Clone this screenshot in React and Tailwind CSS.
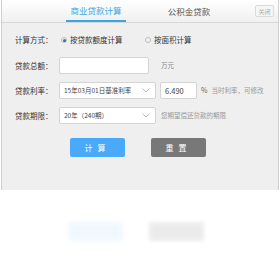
import React from 'react';

const font = { fontFamily: '"Noto Sans CJK SC", "Liberation Sans", sans-serif' };

function Chevron() {
  return (
    <svg width="8" height="5" viewBox="0 0 8 5" className="shrink-0">
      <path d="M0.5 0.5 L4 4 L7.5 0.5" fill="none" stroke="#aaa" strokeWidth="0.8" />
    </svg>
  );
}

function Radio({ checked }) {
  return (
    <span className="w-[6px] h-[6px] rounded-full border border-[#bbb] bg-[#f4f4f4] flex items-center justify-center">
      {checked && <span className="w-[3px] h-[3px] rounded-full bg-[#2a6fb3]" />}
    </span>
  );
}

function Buttons({ ghost }) {
  return (
    <div className="flex gap-[26px] pl-[68px]">
      <div className={`w-[55px] h-[19px] rounded-[2px] flex items-center justify-center text-[8px] text-white tracking-[5px] ${ghost ? 'bg-[#dbeeff]' : 'bg-[#49a9fb]'}`}>
        {ghost ? '' : '计算'}
      </div>
      <div className={`w-[55px] h-[19px] rounded-[2px] flex items-center justify-center text-[8px] text-white tracking-[5px] ${ghost ? 'bg-[#cfcfcf]' : 'bg-[#787878]'}`}>
        {ghost ? '' : '重置'}
      </div>
    </div>
  );
}

export default function App() {
  return (
    <div className="w-[280px] h-[270px] bg-white overflow-hidden" style={font}>
      <div className="mx-[1px] border-x border-[#cfcfcf] bg-[#efefef] h-[190px]">
        <div className="h-[23px] border-b border-[#d8d8d8] bg-gradient-to-b from-white to-[#f0f0f0] flex items-end relative">
          <div className="ml-[64px] w-[60px] h-[22px] flex items-center justify-center text-[8.5px] text-[#3aa6e8] border-b-2 border-[#3aa6e8]">
            商业贷款计算
          </div>
          <div className="ml-[33px] w-[60px] h-[22px] flex items-center justify-center text-[8.5px] text-[#555]">
            公积金贷款
          </div>
          <div className="absolute right-[4px] top-[5px] w-[19px] h-[12px] border border-[#dadada] rounded-[2px] bg-[#f6f6f6] text-[6px] text-[#aaa] flex items-center justify-center">
            关闭
          </div>
        </div>

        <div className="pl-[13px] pt-[9px] text-[7.5px] text-[#333]">
          <div className="flex items-center h-[16px]">
            <span className="w-[46px]">计算方式：</span>
            <Radio checked />
            <span className="ml-[3px] w-[75px]">按贷款额度计算</span>
            <Radio />
            <span className="ml-[3px]">按面积计算</span>
          </div>

          <div className="flex items-center mt-[9px] h-[17px]">
            <span className="w-[44px]">贷款总额：</span>
            <div className="w-[90px] h-[17px] bg-white border border-[#d4d4d4] rounded-[2px]" />
            <span className="ml-[12px] text-[6.5px] text-[#888]">万元</span>
          </div>

          <div className="flex items-center mt-[8px] h-[17px]">
            <span className="w-[44px]">贷款利率：</span>
            <div className="w-[97px] h-[17px] bg-white border border-[#d4d4d4] rounded-[2px] flex items-center justify-between pl-[4px] pr-[5px] text-[6.5px] text-[#444]">
              <span>15年03月01日基准利率</span>
              <Chevron />
            </div>
            <div className="ml-[4px] w-[37px] h-[17px] bg-white border border-[#d4d4d4] rounded-[2px] flex items-center pl-[4px] text-[7.5px] text-[#444]">
              6.490
            </div>
            <span className="ml-[4px] text-[7px] text-[#666]">%</span>
            <span className="ml-[4px] text-[6.5px] text-[#999]">当时利率，可修改</span>
          </div>

          <div className="flex items-center mt-[8px] h-[17px]">
            <span className="w-[44px]">贷款期限：</span>
            <div className="w-[97px] h-[17px] bg-white border border-[#d4d4d4] rounded-[2px] flex items-center justify-between pl-[4px] pr-[5px] text-[6.5px] text-[#444]">
              <span>20年（240期）</span>
              <Chevron />
            </div>
            <span className="ml-[5px] text-[6.5px] text-[#999]">您期望偿还贷款的期限</span>
          </div>

          <div className="mt-[14px] -ml-[13px]">
            <Buttons />
          </div>
        </div>
      </div>

      <div className="pt-[32px] opacity-40 blur-[2px]">
        <Buttons ghost />
      </div>
    </div>
  );
}
